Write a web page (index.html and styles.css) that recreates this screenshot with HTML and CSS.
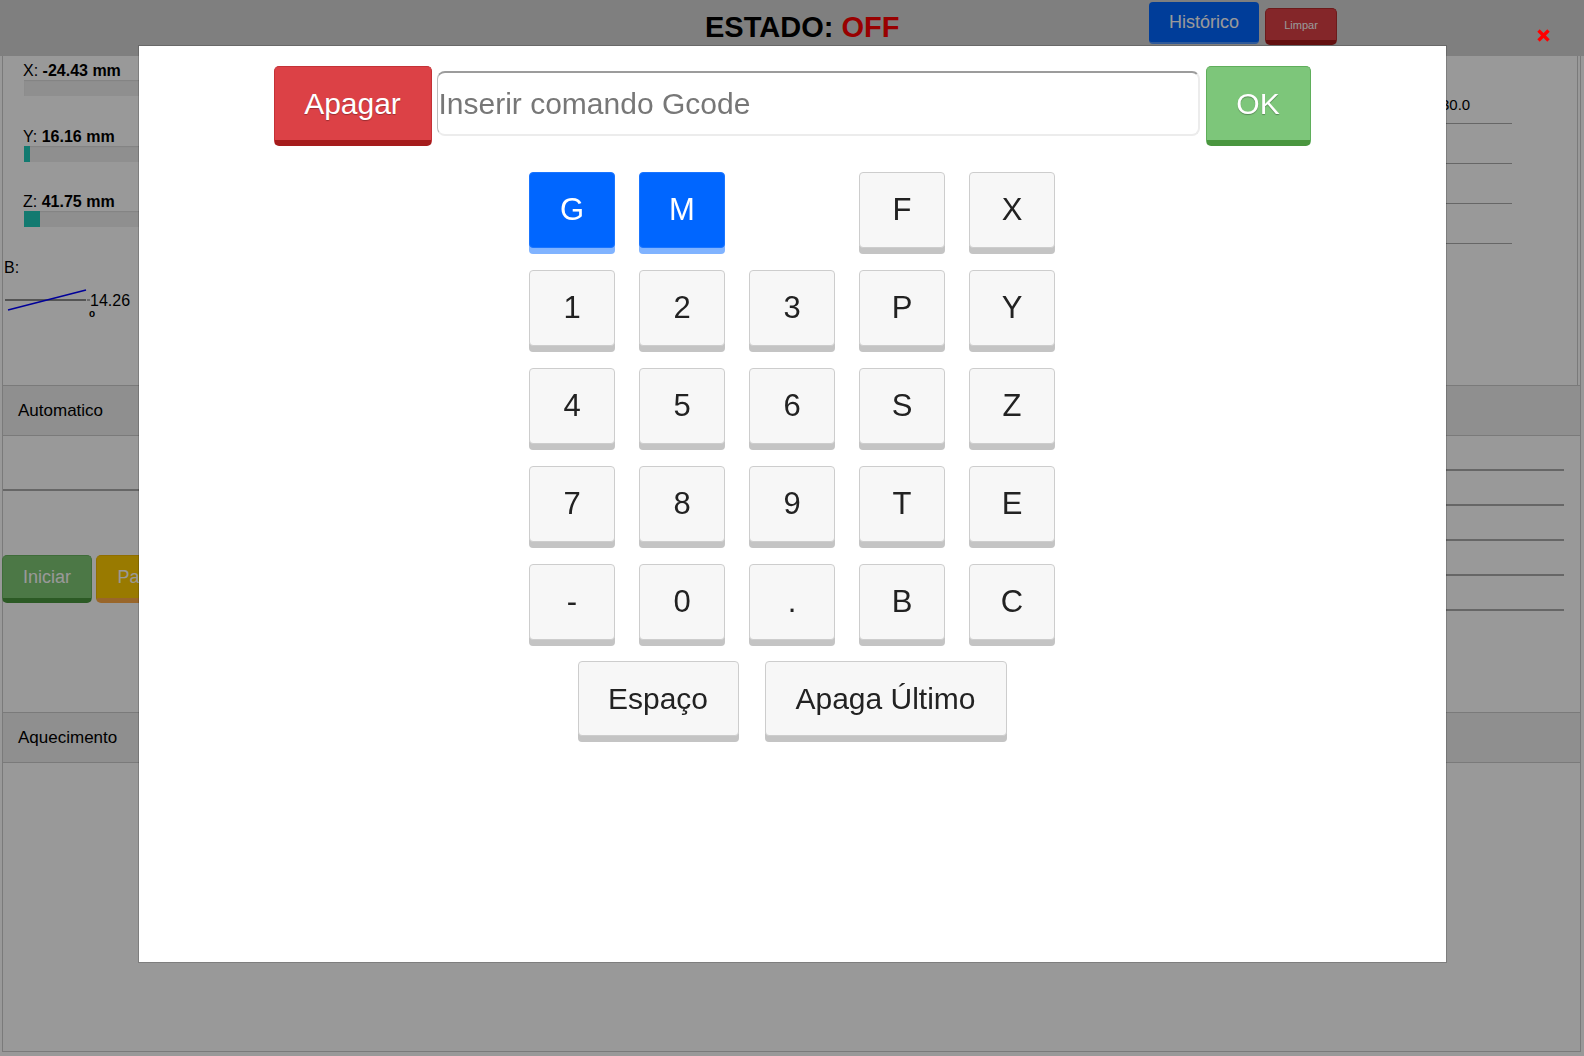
FILE: index.html
```html
<!DOCTYPE html>
<html lang="pt">
<head>
<meta charset="utf-8">
<title>Controle CNC</title>
<link rel="stylesheet" href="styles.css">
</head>
<body>
<header class="topbar">
  <h1 class="estado">ESTADO: <span class="off">OFF</span></h1>
  <div class="top-actions">
    <button class="btn-hist">Histórico</button>
    <button class="btn-limpar">Limpar</button>
  </div>
</header>

<main class="workspace">
  <section class="top-row">
    <div class="coords">
      <div class="axis">
        <div class="axis-label">X: <b>-24.43 mm</b></div>
        <div class="axis-bar"><div class="axis-fill" style="width:0px"></div></div>
      </div>
      <div class="axis">
        <div class="axis-label">Y: <b>16.16 mm</b></div>
        <div class="axis-bar"><div class="axis-fill" style="width:6px"></div></div>
      </div>
      <div class="axis">
        <div class="axis-label">Z: <b>41.75 mm</b></div>
        <div class="axis-bar"><div class="axis-fill" style="width:16px"></div></div>
      </div>
      <div class="b-axis">
        <div class="axis-label">B:</div>
        <div class="b-gauge">
          <svg class="b-svg" width="86" height="30" viewBox="0 0 86 30">
            <line x1="1" y1="17" x2="82" y2="17" stroke="#666" stroke-width="1.5"/>
            <line x1="83" y1="17" x2="86" y2="17" stroke="#666" stroke-width="1"/>
            <line x1="4" y1="27" x2="82" y2="7" stroke="#0000ff" stroke-width="1.5"/>
          </svg>
          <div class="b-value">
            <span class="b-num">14.26</span>
            <span class="b-deg">o</span>
          </div>
        </div>
      </div>
    </div>
    <div class="center-area"></div>
    <div class="values">
      <div class="val-row"><span class="val-name"></span><span class="val-num">30.0</span></div>
      <div class="val-row"><span class="val-name"></span><span class="val-num"></span></div>
      <div class="val-row"><span class="val-name"></span><span class="val-num"></span></div>
      <div class="val-row"><span class="val-name"></span><span class="val-num"></span></div>
    </div>
  </section>

  <nav class="tabbar">
    <span class="tab">Automatico</span>
    <span class="tab tab-alt">Manual</span>
  </nav>

  <section class="tab-body">
    <div class="run-col">
      <div class="file-row"></div>
      <div class="run-buttons">
        <button class="btn-run btn-iniciar">Iniciar</button>
        <button class="btn-run btn-pausar">Pausar</button>
      </div>
    </div>
    <div class="center-area"></div>
    <div class="log-col">
      <div class="log-row"></div>
      <div class="log-row"></div>
      <div class="log-row"></div>
      <div class="log-row"></div>
      <div class="log-row"></div>
    </div>
  </section>

  <nav class="tabbar">
    <span class="tab">Aquecimento</span>
  </nav>

  <section class="heat-body"></section>
</main>

<div class="overlay">
  <button class="close-x" aria-label="Fechar">
    <svg width="13" height="13" viewBox="0 0 13 13">
      <line x1="1.5" y1="1.5" x2="11.5" y2="11.5" stroke="#ff0000" stroke-width="3.4"/>
      <line x1="11.5" y1="1.5" x2="1.5" y2="11.5" stroke="#ff0000" stroke-width="3.4"/>
    </svg>
  </button>
  <div class="modal">
    <div class="cmd-row">
      <button class="btn-apagar">Apagar</button>
      <input class="cmd-input" type="text" placeholder="Inserir comando Gcode">
      <button class="btn-ok">OK</button>
    </div>
    <div class="keypad">
      <button class="key key-blue">G</button>
      <button class="key key-blue">M</button>
      <span class="key-empty"></span>
      <button class="key">F</button>
      <button class="key">X</button>
      <button class="key">1</button>
      <button class="key">2</button>
      <button class="key">3</button>
      <button class="key">P</button>
      <button class="key">Y</button>
      <button class="key">4</button>
      <button class="key">5</button>
      <button class="key">6</button>
      <button class="key">S</button>
      <button class="key">Z</button>
      <button class="key">7</button>
      <button class="key">8</button>
      <button class="key">9</button>
      <button class="key">T</button>
      <button class="key">E</button>
      <button class="key">-</button>
      <button class="key">0</button>
      <button class="key">.</button>
      <button class="key">B</button>
      <button class="key">C</button>
    </div>
    <div class="wide-row">
      <button class="key key-space">Espaço</button>
      <button class="key key-back">Apaga Último</button>
    </div>
  </div>
</div>
</body>
</html>
```

FILE: styles.css
```css
* { box-sizing: border-box; }
html, body { margin: 0; padding: 0; }
body {
  width: 1584px;
  height: 1056px;
  overflow: hidden;
  background: #ffffff;
  color: #000;
  font-family: "Liberation Sans", Arial, sans-serif;
}
button { font-family: inherit; cursor: pointer; padding: 0; }

/* ---------- top bar ---------- */
.topbar {
  height: 56px;
  background: #d4d4d4;
  display: flex;
  align-items: flex-start;
}
.estado {
  margin: 13px 0 0 705px;
  font-size: 29px;
  line-height: 29px;
  font-weight: bold;
  color: #000;
  white-space: nowrap;
}
.estado .off { color: #ff0000; }
.top-actions {
  margin-left: auto;
  margin-right: 247px;
  display: flex;
  gap: 6px;
  align-items: flex-start;
}
.btn-hist {
  margin-top: 2px;
  width: 110px;
  height: 42px;
  background: #0066ff;
  color: #fff;
  font-size: 18px;
  border: none;
  border-bottom: 2px solid #4d94ff;
  border-radius: 4px;
}
.btn-limpar {
  margin-top: 8px;
  width: 72px;
  height: 37px;
  background: #dc4045;
  color: #fff;
  font-size: 11px;
  border: 1px solid #b52d2d;
  border-bottom: 5px solid #a51c1c;
  border-radius: 5px;
}

/* ---------- workspace ---------- */
.workspace {
  margin: 0 3px 0 2px;
  height: 996px;
  border-left: 1px solid #cccccc;
  border-right: 1px solid #cccccc;
  border-bottom: 1px solid #cccccc;
  display: flex;
  flex-direction: column;
}
.top-row {
  height: 329px;
  display: flex;
}
.coords {
  width: 420px;
  padding-top: 5px;
}
.axis {
  padding-left: 20px;
  margin-bottom: 30.5px;
}
.axis-label {
  font-size: 16px;
  line-height: 19px;
}
.axis-bar {
  width: 380px;
  height: 16px;
  margin-left: 1px;
  background: #eeeeee;
  box-shadow: inset 0 1px 1px rgba(0,0,0,0.08);
}
.axis-fill {
  height: 16px;
  background: #1fcbbb;
}
.b-axis { padding-left: 1px; }
.b-gauge {
  display: flex;
  align-items: flex-start;
  margin-top: 6.5px;
}
.b-svg { display: block; }
.b-value {
  display: flex;
  flex-direction: column;
  margin-top: 9.5px;
  margin-left: 0;
}
.b-num { font-size: 16px; line-height: 16px; }
.b-deg { font-size: 10px; line-height: 10px; font-weight: bold; margin-left: -1px; }

.center-area { flex: 1; }

.values {
  width: 390px;
  margin-right: 2px;
  border-right: 1px solid #cccccc;
  padding-top: 28px;
}
.val-row {
  height: 40px;
  margin-right: 65px;
  padding-top: 12px;
  border-bottom: 1px solid #aaaaaa;
  display: grid;
  grid-template-columns: 1fr 71px;
  font-size: 15px;
  line-height: 17px;
}

/* ---------- tabs ---------- */
.tabbar {
  height: 51px;
  background: #eeeeee;
  border-top: 1px solid #cccccc;
  border-bottom: 1px solid #cccccc;
  display: flex;
  gap: 37px;
  padding-left: 15px;
  font-size: 17px;
  line-height: 49px;
}
.tab { color: #000; }
.tab-alt { color: #c8641e; }

.tab-body {
  height: 276px;
  display: flex;
}
.run-col { width: 420px; }
.file-row {
  height: 55px;
  border-bottom: 2px solid #aaaaaa;
}
.run-buttons {
  margin-top: 64px;
  margin-left: -1px;
  display: flex;
  gap: 4px;
}
.btn-run {
  width: 90px;
  height: 48px;
  color: #fff;
  font-size: 18px;
  border-radius: 5px;
  border: 1px solid transparent;
  border-bottom-width: 5px;
}
.btn-iniciar {
  background: #7fc875;
  border-color: #6ab562;
  border-bottom-color: #4a963f;
}
.btn-pausar {
  width: 100px;
  background: #ffcb00;
  border-color: #f0b800;
  border-bottom-color: #ffaa46;
}
.log-col {
  width: 400px;
  margin-right: 16px;
}
.log-row {
  height: 35px;
  border-bottom: 2px solid #aaaaaa;
}
.heat-body { flex: 1; }

/* ---------- modal ---------- */
.overlay {
  position: fixed;
  inset: 0;
  background: rgba(0,0,0,0.4);
  display: flex;
  justify-content: center;
  align-items: flex-start;
  padding-top: 46px;
}
.close-x {
  position: absolute;
  left: 1537px;
  top: 29px;
  width: 13px;
  height: 13px;
  border: none;
  background: none;
}
.close-x svg { display: block; }
.modal {
  width: 1307px;
  height: 916px;
  background: #ffffff;
  box-shadow: 0 0 0 1px rgba(0,0,0,0.18);
  display: flex;
  flex-direction: column;
  align-items: center;
  padding-top: 20px;
}
.cmd-row {
  display: flex;
  align-items: flex-start;
}
.btn-apagar,
.btn-ok {
  height: 80px;
  color: #fff;
  font-size: 30px;
  border-radius: 5px;
  border: 1px solid transparent;
  border-bottom-width: 6px;
  text-shadow: 0 1px 1px rgba(0,0,0,0.3);
}
.btn-apagar {
  width: 158px;
  margin-right: 5px;
  background: #dc4146;
  border-color: #c43237;
  border-bottom-color: #a51c1c;
}
.btn-ok {
  width: 105px;
  margin-left: 6px;
  background: #7dc67a;
  border-color: #5fae5b;
  border-bottom-color: #4a963f;
}
.cmd-input {
  width: 763px;
  height: 65px;
  margin-top: 5px;
  padding: 0 0 0 1px;
  font-family: inherit;
  font-size: 30px;
  color: #333;
  background: #fff;
  border: 2px solid #ececec;
  border-top-color: #9c9c9c;
  border-left: 1px solid #bdbdbd;
  border-radius: 8px;
  outline: none;
}
.cmd-input::placeholder { color: #777777; }

.keypad {
  margin-top: 26px;
  display: grid;
  grid-template-columns: repeat(5, 86px);
  grid-auto-rows: 76px;
  column-gap: 24px;
  row-gap: 22px;
}
.key {
  background: #f7f7f7;
  border: 1px solid #cdcdcd;
  border-radius: 4px;
  box-shadow: 0 6px 0 #c4c4c4;
  color: #222;
  font-size: 31px;
}
.key-blue {
  background: #0066ff;
  border-color: #1a75ff;
  box-shadow: 0 6px 0 #80b3ff;
  color: #fff;
}
.wide-row {
  margin-top: 21px;
  display: flex;
  gap: 26px;
}
.wide-row .key {
  height: 75px;
  font-size: 30px;
}
.key-space { width: 161px; }
.key-back { width: 242px; }
```
